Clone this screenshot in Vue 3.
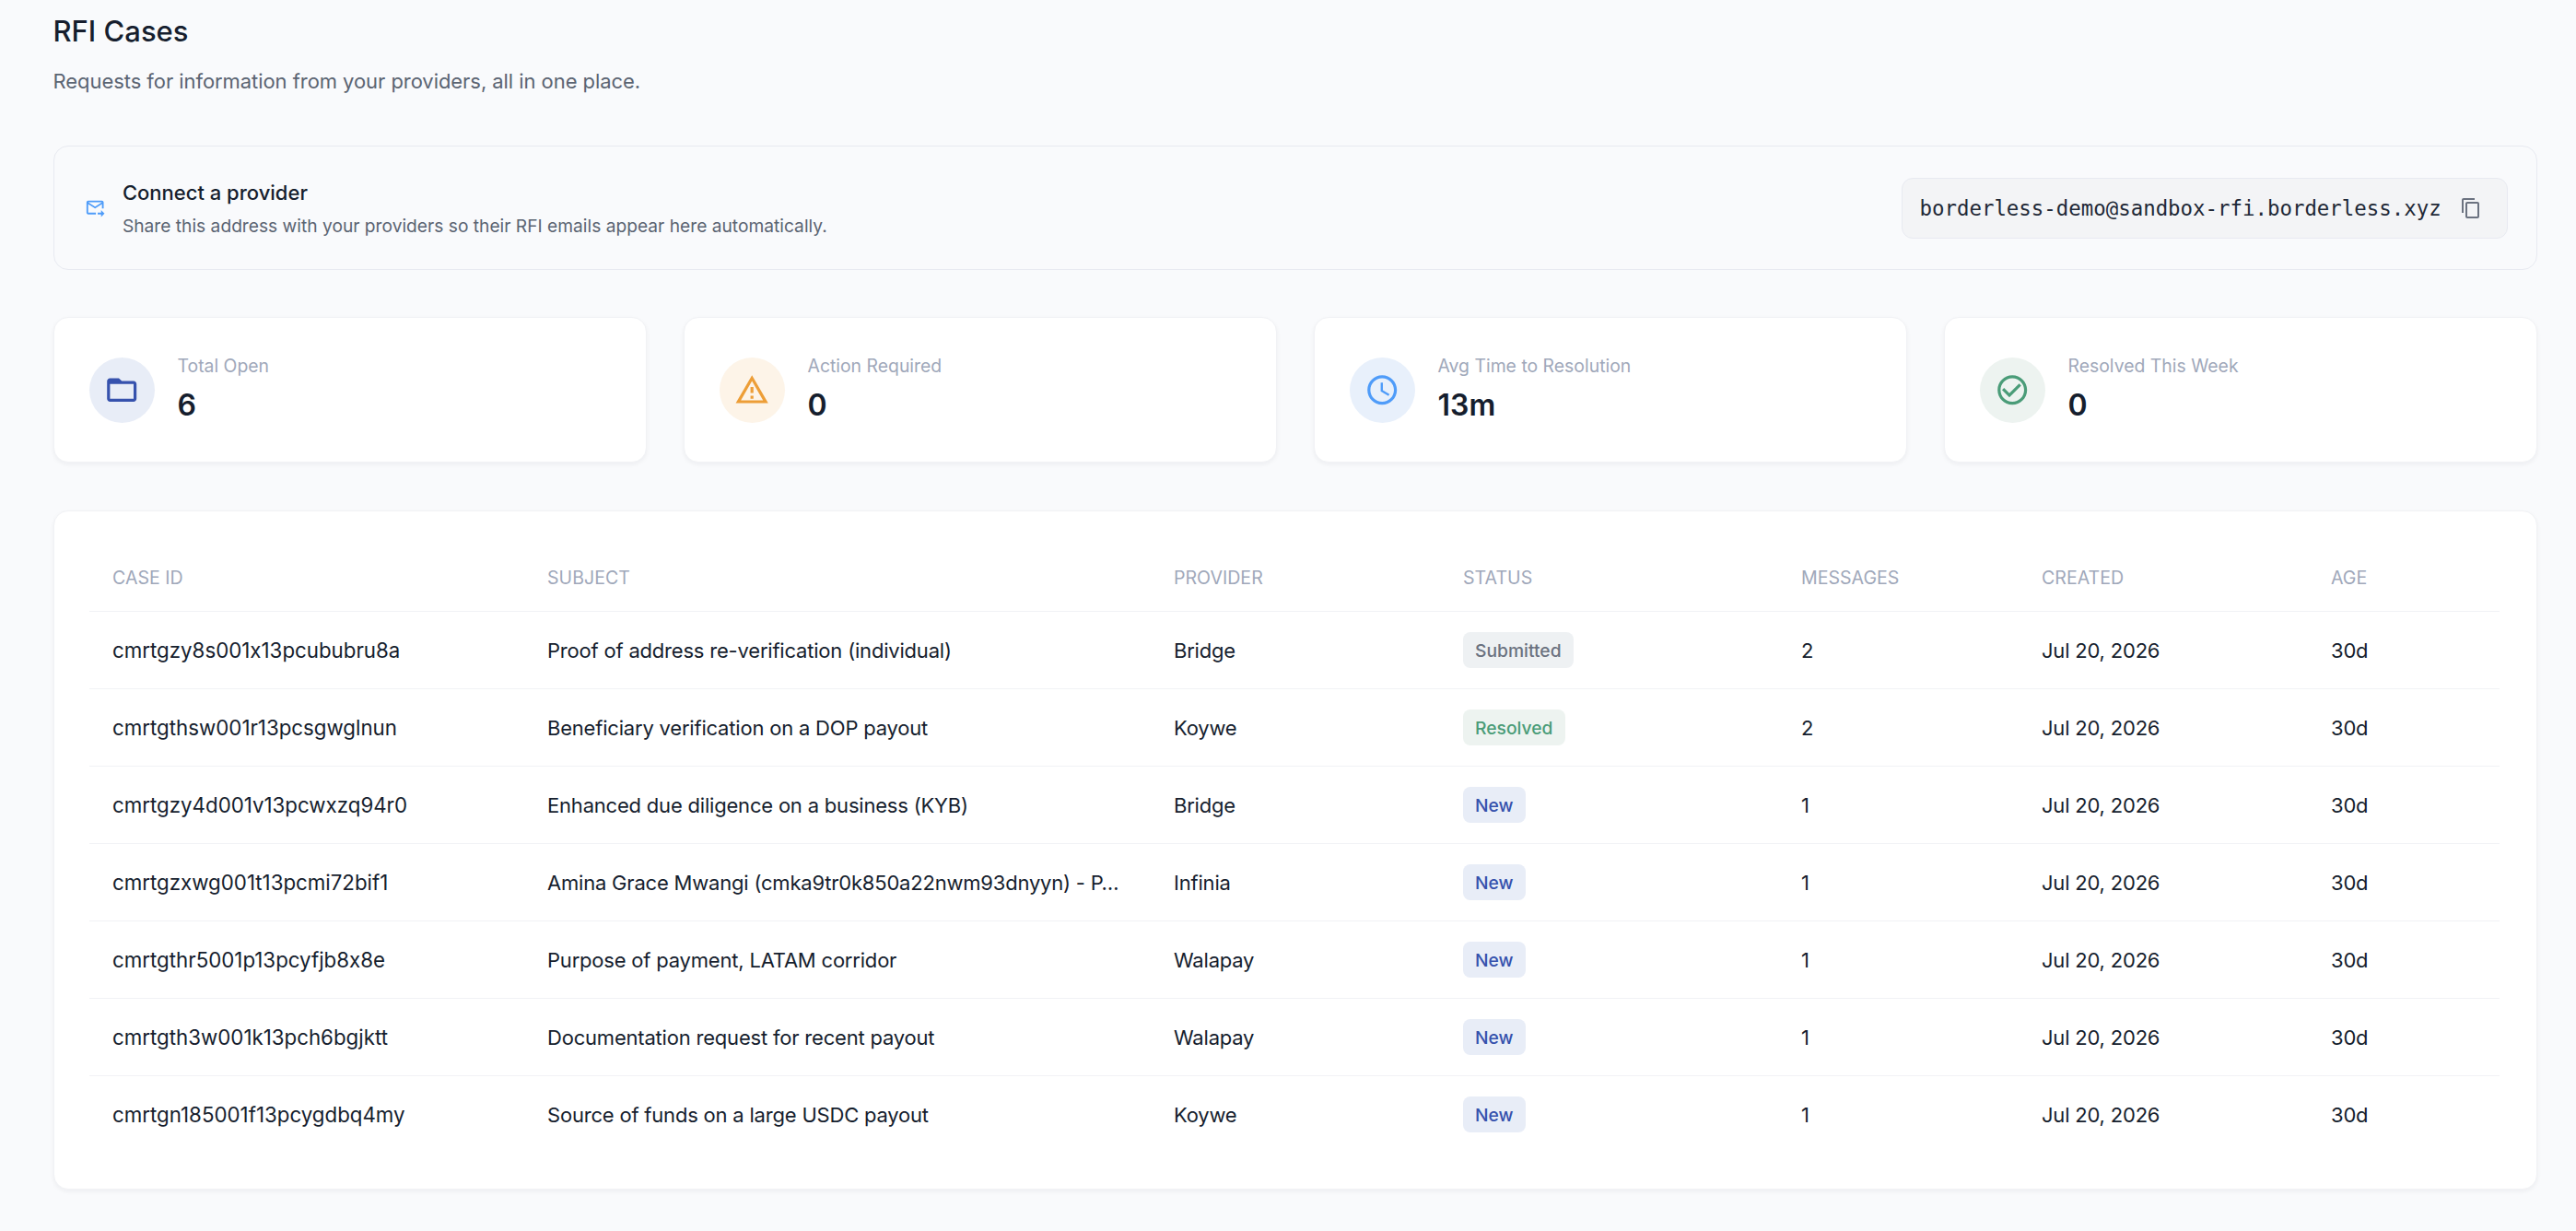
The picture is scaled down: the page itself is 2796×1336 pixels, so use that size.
<template>
  <div class="page">
    <!-- Header -->
    <h1 class="page-title">RFI Cases</h1>
    <p class="page-subtitle">Requests for information from your providers, all in one place.</p>

    <!-- Connect a provider -->
    <section class="connect-card">
      <svg class="connect-icon" viewBox="0 0 24 24">
        <path d="M20 4H4c-1.1 0-2 .9-2 2v12c0 1.1.9 2 2 2h9v-2H4V8l8 5 8-5v5h2V6c0-1.1-.9-2-2-2zm-8 7L4 6h16l-8 5zm7 4 4 4-4 4v-3h-4v-2h4v-3z" />
      </svg>
      <div class="connect-text">
        <div class="connect-title">Connect a provider</div>
        <div class="connect-desc">Share this address with your providers so their RFI emails appear here automatically.</div>
      </div>
      <div class="address-box">
        <span class="address">borderless-demo@sandbox-rfi.borderless.xyz</span>
        <svg class="copy-icon" viewBox="0 0 24 24">
          <path d="M16 1H4c-1.1 0-2 .9-2 2v14h2V3h12V1zm3 4H8c-1.1 0-2 .9-2 2v14c0 1.1.9 2 2 2h11c1.1 0 2-.9 2-2V7c0-1.1-.9-2-2-2zm0 16H8V7h11v14z" />
        </svg>
      </div>
    </section>

    <!-- Stats -->
    <section class="stats">
      <div v-for="stat in stats" :key="stat.label" class="stat-card">
        <div class="stat-circle" :class="stat.tone">
          <svg class="stat-icon" viewBox="0 0 24 24"><path :d="stat.icon" /></svg>
        </div>
        <div class="stat-body">
          <div class="stat-label">{{ stat.label }}</div>
          <div class="stat-value">{{ stat.value }}</div>
        </div>
      </div>
    </section>

    <!-- Cases table -->
    <section class="table-card">
      <table class="cases">
        <colgroup>
          <col v-for="w in colWidths" :key="w.name" :class="w.name" />
        </colgroup>
        <thead>
          <tr>
            <th v-for="h in headers" :key="h">{{ h }}</th>
          </tr>
        </thead>
        <tbody>
          <tr v-for="row in rows" :key="row.id">
            <td class="case-id">{{ row.id }}</td>
            <td><div class="subject">{{ row.subject }}</div></td>
            <td>{{ row.provider }}</td>
            <td><span class="badge" :class="row.status.toLowerCase()">{{ row.status }}</span></td>
            <td>{{ row.messages }}</td>
            <td>{{ row.created }}</td>
            <td>{{ row.age }}</td>
          </tr>
        </tbody>
      </table>
    </section>
  </div>
</template>

<script setup>
const stats = [
  {
    label: 'Total Open',
    value: '6',
    tone: 'indigo',
    icon: 'M20 6h-8l-2-2H4c-1.1 0-1.99.9-1.99 2L2 18c0 1.1.9 2 2 2h16c1.1 0 2-.9 2-2V8c0-1.1-.9-2-2-2zm0 12H4V8h16v10z'
  },
  {
    label: 'Action Required',
    value: '0',
    tone: 'amber',
    icon: 'M12 5.99 19.53 19H4.47L12 5.99M12 2 1 21h22L12 2zm1 14h-2v2h2v-2zm0-6h-2v4h2v-4z'
  },
  {
    label: 'Avg Time to Resolution',
    value: '13m',
    tone: 'blue',
    icon: 'M11.99 2C6.47 2 2 6.48 2 12s4.47 10 9.99 10C17.52 22 22 17.52 22 12S17.52 2 11.99 2zM12 20c-4.42 0-8-3.58-8-8s3.58-8 8-8 8 3.58 8 8-3.58 8-8 8zm.5-13H11v6l5.25 3.15.75-1.23-4.5-2.67z'
  },
  {
    label: 'Resolved This Week',
    value: '0',
    tone: 'green',
    icon: 'M16.59 7.58 10 14.17l-3.59-3.58L5 12l5 5 8-8zM12 2C6.48 2 2 6.48 2 12s4.48 10 10 10 10-4.48 10-10S17.52 2 12 2zm0 18c-4.42 0-8-3.58-8-8s3.58-8 8-8 8 3.58 8 8-3.58 8-8 8z'
  }
]

const headers = ['Case ID', 'Subject', 'Provider', 'Status', 'Messages', 'Created', 'Age']
const colWidths = ['c-id', 'c-subject', 'c-provider', 'c-status', 'c-messages', 'c-created', 'c-age'].map((name) => ({ name }))

const rows = [
  { id: 'cmrtgzy8s001x13pcububru8a', subject: 'Proof of address re-verification (individual)', provider: 'Bridge', status: 'Submitted', messages: 2 },
  { id: 'cmrtgthsw001r13pcsgwglnun', subject: 'Beneficiary verification on a DOP payout', provider: 'Koywe', status: 'Resolved', messages: 2 },
  { id: 'cmrtgzy4d001v13pcwxzq94r0', subject: 'Enhanced due diligence on a business (KYB)', provider: 'Bridge', status: 'New', messages: 1 },
  { id: 'cmrtgzxwg001t13pcmi72bif1', subject: 'Amina Grace Mwangi (cmka9tr0k850a22nwm93dnyyn) - P…', provider: 'Infinia', status: 'New', messages: 1 },
  { id: 'cmrtgthr5001p13pcyfjb8x8e', subject: 'Purpose of payment, LATAM corridor', provider: 'Walapay', status: 'New', messages: 1 },
  { id: 'cmrtgth3w001k13pch6bgjktt', subject: 'Documentation request for recent payout', provider: 'Walapay', status: 'New', messages: 1 },
  { id: 'cmrtgn185001f13pcygdbq4my', subject: 'Source of funds on a large USDC payout', provider: 'Koywe', status: 'New', messages: 1 }
].map((row) => ({ ...row, created: 'Jul 20, 2026', age: '30d' }))
</script>

<style>
body {
  background: #f9fafc;
}
</style>

<style scoped>
.page {
  box-sizing: border-box;
  min-height: 1336px;
  padding: 14px 42.5px 45px 57.5px;
  background: #f9fafc;
  font-family: Inter, "Liberation Sans", sans-serif;
  font-feature-settings: "calt" 0;
  color: #161e2e;
}

.page-title {
  margin: 0;
  font-size: 31px;
  line-height: 40px;
  font-weight: 500;
  color: #161e2e;
}

.page-subtitle {
  margin: 14px 0 0;
  font-size: 22px;
  line-height: 40px;
  font-weight: 400;
  letter-spacing: -0.06px;
  color: #5b6472;
}

.connect-card {
  display: flex;
  align-items: center;
  box-sizing: border-box;
  height: 135px;
  margin-top: 50px;
  padding: 0 31px 0 33px;
  background: #f9fafc;
  border: 1.6px solid #e8eaf1;
  border-radius: 16px;
}

.connect-icon {
  width: 22.4px;
  height: 22.4px;
  margin-right: 19px;
  fill: #4f9cf9;
  flex-shrink: 0;
}

.connect-text {
  flex: 1;
}

.connect-title {
  font-size: 22px;
  line-height: 32px;
  font-weight: 500;
  color: #161e2e;
}

.connect-desc {
  margin-top: 6px;
  font-size: 19.2px;
  line-height: 28px;
  color: #5b6472;
}

.address-box {
  display: flex;
  align-items: center;
  box-sizing: border-box;
  width: 658px;
  height: 66px;
  padding: 0 18px 0 19px;
  background: #f3f4f6;
  border: 1.6px solid #e8eaf1;
  border-radius: 12px;
}

.address {
  flex: 1;
  font-family: "DejaVu Sans Mono", monospace;
  font-size: 22.4px;
  color: #1f2937;
  white-space: nowrap;
}

.copy-icon {
  width: 24px;
  height: 24px;
  margin-right: 9px;
  fill: #6b7280;
  flex-shrink: 0;
}

.stats {
  display: grid;
  grid-template-columns: repeat(4, 1fr);
  gap: 40px;
  margin-top: 51px;
}

.stat-card {
  display: flex;
  align-items: center;
  gap: 24.5px;
  box-sizing: border-box;
  height: 158px;
  padding: 0 38.5px;
  background: #fff;
  border: 1.6px solid #f1f2f5;
  border-radius: 16px;
  box-shadow: 0 2px 5px rgba(17, 24, 39, 0.05);
}

.stat-circle {
  display: flex;
  align-items: center;
  justify-content: center;
  width: 71px;
  height: 71px;
  border-radius: 50%;
  flex-shrink: 0;
}

.stat-icon {
  width: 38.4px;
  height: 38.4px;
}

.indigo { background: #e8edf7; fill: #3652ad; }
.amber { background: #fdf4e8; fill: #ed9e37; }
.blue { background: #e8f0fb; fill: #4f9cf9; }
.green { background: #edf3f0; fill: #4a9c78; }

.stat-body {
  padding-bottom: 3px;
}

.stat-label {
  font-size: 19.4px;
  line-height: 28px;
  color: #9fa8ba;
}

.stat-value {
  margin-top: 9px;
  font-size: 32px;
  line-height: 40px;
  font-weight: 600;
  color: #161e2e;
}

.table-card {
  box-sizing: border-box;
  height: 737px;
  margin-top: 52px;
  padding: 36px 38px 0 38.5px;
  background: #fff;
  border: 1.6px solid #f1f2f5;
  border-radius: 16px;
  box-shadow: 0 2px 5px rgba(17, 24, 39, 0.05);
}

.cases {
  width: 2616px;
  border-collapse: collapse;
  table-layout: fixed;
}

.c-id { width: 472px; }
.c-subject { width: 680px; }
.c-provider { width: 314px; }
.c-status { width: 367px; }
.c-messages { width: 261px; }
.c-created { width: 314px; }
.c-age { width: 208px; }

.cases th {
  height: 72px;
  padding: 0 25px;
  text-align: left;
  font-size: 19.6px;
  font-weight: 400;
  text-transform: uppercase;
  color: #9fa8ba;
  border-bottom: 1.6px solid #f1f2f5;
}

.cases td {
  height: 84px;
  padding: 0 25px;
  box-sizing: border-box;
  font-size: 22px;
  letter-spacing: -0.2px;
  color: #161e2e;
  white-space: nowrap;
  border-bottom: 1.6px solid #f1f2f5;
}

.cases td.case-id {
  font-size: 22.3px;
  letter-spacing: 0;
}

.cases tbody tr:last-child td {
  border-bottom: none;
}

.subject {
  max-width: 630px;
  overflow: hidden;
}

.badge {
  display: inline-flex;
  align-items: center;
  box-sizing: border-box;
  height: 39px;
  padding: 0 13px;
  border-radius: 8px;
  font-size: 19.3px;
  letter-spacing: 0;
  font-weight: 500;
}

.submitted { background: #eef1f3; color: #6b7280; }
.resolved { background: #edf3f0; color: #4a9c78; }
.new { background: #e8edf7; color: #3652ad; }
</style>
